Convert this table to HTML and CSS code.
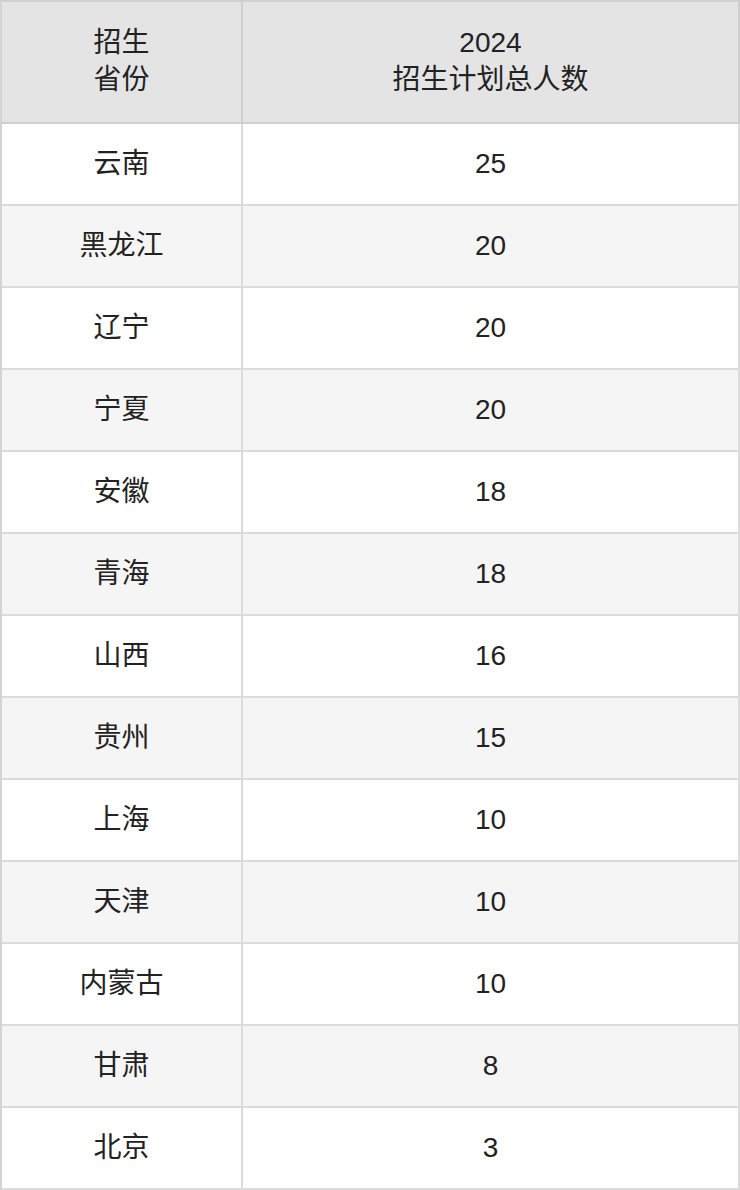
FILE: index.html
```html
<!DOCTYPE html>
<html lang="zh-CN">
<head>
<meta charset="utf-8">
<title>招生计划</title>
<link rel="stylesheet" href="styles.css">
</head>
<body>
<table class="plan">
  <thead>
    <tr>
      <th class="c1">招生<br>省份</th>
      <th class="c2">2024<br>招生计划总人数</th>
    </tr>
  </thead>
  <tbody>
    <tr><td>云南</td><td>25</td></tr>
    <tr><td>黑龙江</td><td>20</td></tr>
    <tr><td>辽宁</td><td>20</td></tr>
    <tr><td>宁夏</td><td>20</td></tr>
    <tr><td>安徽</td><td>18</td></tr>
    <tr><td>青海</td><td>18</td></tr>
    <tr><td>山西</td><td>16</td></tr>
    <tr><td>贵州</td><td>15</td></tr>
    <tr><td>上海</td><td>10</td></tr>
    <tr><td>天津</td><td>10</td></tr>
    <tr><td>内蒙古</td><td>10</td></tr>
    <tr><td>甘肃</td><td>8</td></tr>
    <tr><td>北京</td><td>3</td></tr>
  </tbody>
</table>
</body>
</html>
```
FILE: styles.css
```css
html, body {
  margin: 0;
  padding: 0;
  background: #ffffff;
}
body {
  font-family: "Liberation Sans", "Noto Sans CJK SC", sans-serif;
  color: #222222;
}
.plan {
  width: 740px;
  border-collapse: separate;
  border-spacing: 0;
  border-left: 2px solid #d4d4d4;
  border-top: 2px solid #cfcfcf;
  table-layout: fixed;
}
.plan th, .plan td {
  padding: 0;
  text-align: center;
  vertical-align: middle;
  font-size: 28px;
  font-weight: normal;
  border-right: 2px solid #dcdcdc;
  border-bottom: 2px solid #dcdcdc;
}
.plan th {
  background: #e4e4e4;
  height: 117px;
  line-height: 37px;
  padding-bottom: 3px;
  border-color: #cfcfcf;
}
.plan .c1 {
  width: 239px;
}
.plan td {
  height: 80px;
  line-height: 36px;
}
.plan tbody tr:nth-child(even) td {
  background: #f5f5f5;
}
```
